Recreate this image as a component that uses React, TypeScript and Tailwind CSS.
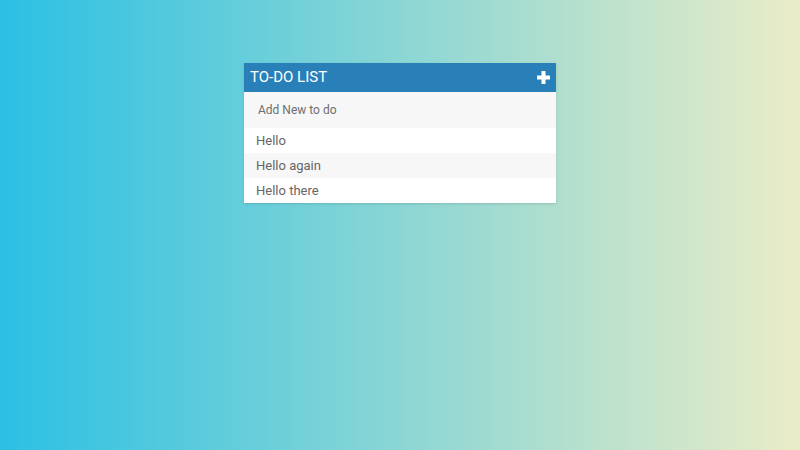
const todos = ['Hello', 'Hello again', 'Hello there']

function PlusIcon() {
  return (
    <svg width="13" height="13" viewBox="0 0 13 13" className="shrink-0">
      <rect x="4.5" y="0" width="4" height="13" rx="0.5" fill="#fff" />
      <rect x="0" y="4.5" width="13" height="4" rx="0.5" fill="#fff" />
    </svg>
  )
}

export default function App() {
  return (
    <div
      className="w-[800px] h-[450px] flex justify-center bg-[linear-gradient(to_right,#2bc0e4,#eaecc6)]"
      style={{ fontFamily: 'Roboto, "Liberation Sans", sans-serif' }}
    >
      <div className="w-[312px] mt-[63px] self-start shadow-sm">
        {/* Header */}
        <div className="h-[29px] bg-[#2980b9] flex items-center justify-between pl-[6px] pr-[6px]">
          <h1 className="text-[15px] text-white uppercase leading-none">To-Do List</h1>
          <PlusIcon />
        </div>

        {/* New todo input */}
        <input
          className="w-full h-[36px] bg-[#f7f7f7] pl-[14px] text-[12px] text-[#666] placeholder:text-[#6e6e6e] outline-none"
          placeholder="Add New to do"
        />

        {/* Items */}
        <ul>
          {todos.map((t, i) => (
            <li
              key={t}
              className={
                'h-[25px] flex items-center pl-[12px] text-[13px] text-[#666] ' +
                (i % 2 === 1 ? 'bg-[#f7f7f7]' : 'bg-white')
              }
            >
              {t}
            </li>
          ))}
        </ul>
      </div>
    </div>
  )
}
